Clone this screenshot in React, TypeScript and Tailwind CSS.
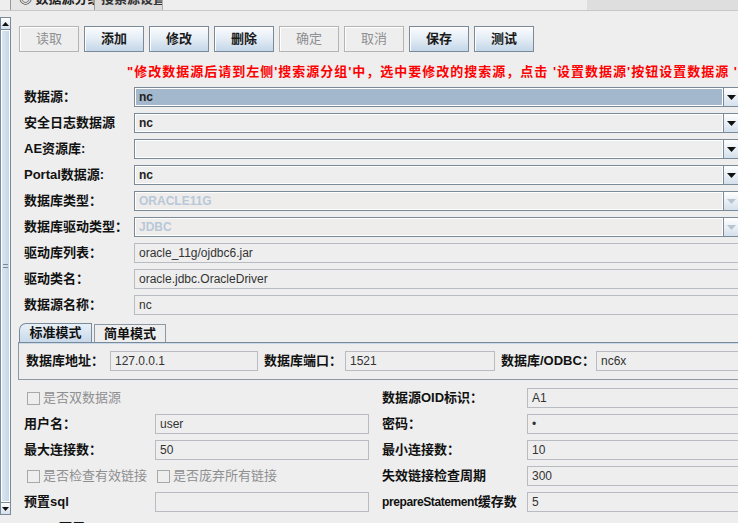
import React from "react";

const FONT = "font-['Liberation_Sans','Noto_Sans_CJK_SC',sans-serif]";

const Btn = ({ label, on }: { label: string; on?: boolean }) => (
  <div
    className={
      on
        ? "w-[60px] h-[26px] flex items-center justify-center border border-[#7a8a99] bg-linear-to-b from-[#fbfcfe] via-[#e3ecf5] to-[#c4d6e8] text-[13px] font-bold text-[#1a1a1a] shadow-[inset_1px_1px_0_#ffffff]"
        : "w-[60px] h-[26px] flex items-center justify-center border border-[#b4b4b4] bg-[#eeeeee] text-[13px] text-[#8e8f91] shadow-[inset_1px_1px_0_#ffffff]"
    }
  >
    {label}
  </div>
);

const Arrow = ({ dim }: { dim?: boolean }) => (
  <div className="w-[16px] h-full flex items-center justify-center border-l border-[#7a8a99] bg-linear-to-b from-[#ffffff] to-[#d4e0ec]">
    <svg width="9" height="5" viewBox="0 0 9 5">
      <path d="M0 0h9L4.5 5z" fill={dim ? "#b8c4d0" : "#111111"} />
    </svg>
  </div>
);

const Combo = ({ value, sel, dis }: { value: string; sel?: boolean; dis?: boolean }) => (
  <div className="flex-1 h-[20px] flex border border-[#7a8a99] bg-[#eeeeee]">
    <div
      className={
        sel
          ? "flex-1 flex items-center pl-[3px] border border-white bg-[#a3b8cc] text-[12px] font-bold text-[#222222]"
          : dis
          ? "flex-1 flex items-center pl-[3px] border border-white bg-[#efedeb] text-[12px] font-bold text-[#b8c8d8]"
          : "flex-1 flex items-center pl-[3px] border border-white text-[12px] font-bold text-[#222222]"
      }
    >
      {value}
    </div>
    <Arrow dim={dis} />
  </div>
);

const Field = ({ value, cls }: { value: string; cls?: string }) => (
  <div
    className={
      "h-[20px] flex items-center pl-[4px] border border-[#b8bcc2] bg-[#eeeeee] text-[12px] text-[#333333] " +
      (cls ?? "flex-1")
    }
  >
    {value}
  </div>
);

const Check = ({ label }: { label: string }) => (
  <div className="flex items-center">
    <div className="w-[13px] h-[13px] border border-[#a8a8a8] bg-[#eeeeee]" />
    <span className="ml-[3px] text-[13px] text-[#8e8f91]">{label}</span>
  </div>
);

const rows = [
  { label: "数据源：", value: "nc", kind: "combo", sel: true },
  { label: "安全日志数据源", value: "nc", kind: "combo" },
  { label: "AE资源库:", value: "", kind: "combo" },
  { label: "Portal数据源:", value: "nc", kind: "combo" },
  { label: "数据库类型：", value: "ORACLE11G", kind: "combo", dis: true },
  { label: "数据库驱动类型：", value: "JDBC", kind: "combo", dis: true },
  { label: "驱动库列表：", value: "oracle_11g/ojdbc6.jar", kind: "field" },
  { label: "驱动类名：", value: "oracle.jdbc.OracleDriver", kind: "field" },
  { label: "数据源名称：", value: "nc", kind: "field" },
];

const Scrollbar = () => (
  <div className="mt-[6px] w-[11px] h-[498px] shrink-0 flex flex-col border border-[#7a8a99] bg-[#eeeeee]">
    <div className="h-[12px] flex items-center justify-center border-b border-[#7a8a99] bg-linear-to-b from-[#ffffff] to-[#d4e0ec]">
      <svg width="7" height="4" viewBox="0 0 7 4">
        <path d="M0 4h7L3.5 0z" fill="#111111" />
      </svg>
    </div>
    <div className="flex-1 flex items-center justify-center border border-white bg-linear-to-r from-[#dbe6f1] to-[#c4d6e8]">
      <div className="flex flex-col gap-[2px]">
        <div className="w-[5px] h-[1px] bg-[#7a8a99]" />
        <div className="w-[5px] h-[1px] bg-[#7a8a99]" />
      </div>
    </div>
    <div className="h-[12px] flex items-center justify-center border-t border-[#7a8a99] bg-linear-to-b from-[#ffffff] to-[#d4e0ec]">
      <svg width="7" height="4" viewBox="0 0 7 4">
        <path d="M0 0h7L3.5 4z" fill="#111111" />
      </svg>
    </div>
  </div>
);

export default function App() {
  return (
    <div className={"w-[738px] h-[523px] overflow-hidden bg-[#eeeeee] flex flex-col " + FONT}>
      {/* cropped tab strip at the very top */}
      <div className="h-[11px] shrink-0 flex border-b border-[#c8c8c8] overflow-hidden">
        <div className="w-[11px] border-r border-[#9a9a9a]" />
        <div className="w-[84px] border-r border-[#9a9a9a] bg-[#e6e6e6] pl-[8px] overflow-hidden">
          <div className="-mt-[9px] leading-[16px] text-[13px] font-bold text-[#222222] whitespace-nowrap">◎ 数据源分组</div>
        </div>
        <div className="w-[68px] border-r border-[#b0b0b0] bg-[#dcdcdc] pl-[6px] overflow-hidden">
          <div className="-mt-[9px] leading-[16px] text-[13px] font-bold text-[#333333] whitespace-nowrap">搜索源设置</div>
        </div>
        <div className="w-[424px]" />
        <div className="flex-1 bg-[#dedede]" />
      </div>

      <div className="flex">
        <Scrollbar />
        <div className="w-[730px] shrink-0 pl-[7px] flex flex-col">
          {/* toolbar */}
          <div className="mt-[15px] ml-[1px] flex gap-[5px]">
            <Btn label="读取" />
            <Btn label="添加" on />
            <Btn label="修改" on />
            <Btn label="删除" on />
            <Btn label="确定" />
            <Btn label="取消" />
            <Btn label="保存" on />
            <Btn label="测试" on />
          </div>

          <div className="mt-[12px] ml-[109px] h-[16px] leading-[16px] text-[13px] tracking-[1px] font-bold text-[#ff0000] whitespace-nowrap">
            "修改数据源后请到左侧'搜索源分组'中，选中要修改的搜索源，点击 '设置数据源'按钮设置数据源 '"
          </div>

          <div className="mt-[7px] w-[722px] flex flex-col gap-[6px]">
            {rows.map((r) => (
              <div key={r.label} className="h-[20px] flex items-center">
                <div className="pl-[6px] w-[116px] shrink-0 text-[13px] font-bold text-[#111111] whitespace-nowrap">{r.label}</div>
                {r.kind === "combo" ? <Combo value={r.value} sel={r.sel} dis={r.dis} /> : <Field value={r.value} />}
              </div>
            ))}
          </div>

          {/* mode tabs */}
          <div className="mt-[8px] w-[722px] flex flex-col">
            <div className="h-[19px] flex items-end">
              <div className="ml-[1px] w-[73px] h-[19px] flex items-center justify-center rounded-tl-[7px] border border-b-0 border-[#7a8a99] bg-linear-to-b from-[#e8f0f8] to-[#c8d9ea] text-[13px] font-bold text-[#111111]">
                标准模式
              </div>
              <div className="ml-[2px] w-[72px] h-[18px] flex items-center justify-center border border-b-0 border-[#8c98a4] bg-[#eeeeee] text-[13px] font-bold text-[#111111]">
                简单模式
              </div>
            </div>
            <div className="h-[38px] flex items-center border border-[#8c98a4] border-t-[#7a8a99] shadow-[inset_0_1px_0_#c8d9ea] pl-[7px]">
              <div className="w-[84px] shrink-0 text-[13px] font-bold text-[#111111] whitespace-nowrap">数据库地址：</div>
              <Field value="127.0.0.1" cls="w-[148px]" />
              <div className="ml-[6px] w-[81px] shrink-0 text-[13px] font-bold text-[#111111] whitespace-nowrap">数据库端口：</div>
              <Field value="1521" cls="w-[150px]" />
              <div className="ml-[6px] w-[95px] shrink-0 text-[13px] font-bold text-[#111111] whitespace-nowrap">数据库/ODBC：</div>
              <Field value="nc6x" />
            </div>
          </div>

          {/* connection settings */}
          <div className="mt-[8px] w-[722px] flex flex-col gap-[6px]">
            <div className="h-[20px] flex items-center">
              <div className="w-[351px] shrink-0 pl-[9px]">
                <Check label="是否双数据源" />
              </div>
              <div className="pl-[13px] w-[158px] shrink-0 text-[13px] font-bold text-[#111111]">数据源OID标识：</div>
              <Field value="A1" />
            </div>
            <div className="h-[20px] flex items-center">
              <div className="w-[351px] shrink-0 flex items-center">
                <div className="pl-[6px] w-[137px] shrink-0 text-[13px] font-bold text-[#111111]">用户名：</div>
                <Field value="user" />
              </div>
              <div className="pl-[13px] w-[158px] shrink-0 text-[13px] font-bold text-[#111111]">密码：</div>
              <Field value="•" />
            </div>
            <div className="h-[20px] flex items-center">
              <div className="w-[351px] shrink-0 flex items-center">
                <div className="pl-[6px] w-[137px] shrink-0 text-[13px] font-bold text-[#111111]">最大连接数：</div>
                <Field value="50" />
              </div>
              <div className="pl-[13px] w-[158px] shrink-0 text-[13px] font-bold text-[#111111]">最小连接数：</div>
              <Field value="10" />
            </div>
            <div className="h-[20px] flex items-center">
              <div className="w-[351px] shrink-0 flex items-center pl-[9px]">
                <div className="w-[130px] shrink-0">
                  <Check label="是否检查有效链接" />
                </div>
                <Check label="是否庞弃所有链接" />
              </div>
              <div className="pl-[13px] w-[158px] shrink-0 text-[13px] font-bold text-[#111111]">失效链接检查周期</div>
              <Field value="300" />
            </div>
            <div className="h-[20px] flex items-center">
              <div className="w-[351px] shrink-0 flex items-center">
                <div className="pl-[6px] w-[137px] shrink-0 text-[13px] font-bold text-[#111111]">预置sql</div>
                <Field value="" />
              </div>
              <div className="pl-[13px] w-[158px] shrink-0 text-[13px] font-bold text-[#111111] whitespace-nowrap">
                <span className="text-[12px] tracking-[-0.4px]">prepareStatement</span>缓存数
              </div>
              <Field value="5" />
            </div>
            <div className="h-[20px] flex items-center">
              <div className="pl-[41px] text-[13px] font-bold text-[#111111]">可用</div>
            </div>
          </div>
        </div>
      </div>
    </div>
  );
}
